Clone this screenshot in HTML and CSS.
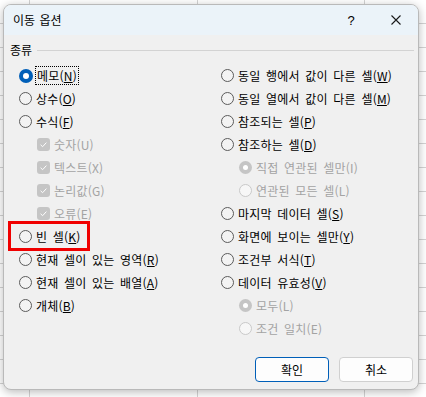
FILE: index.html
```html
<!DOCTYPE html>
<html lang="ko">
<head>
<meta charset="utf-8">
<title>이동 옵션</title>
<link rel="stylesheet" href="styles.css">
</head>
<body>
<div class="dialog">
  <div class="titlebar">
    <span class="title">이동 옵션</span>
    <span class="cap help">?</span>
    <span class="cap close"><svg width="10" height="10" viewBox="0 0 10 10"><path d="M0.5 0.5L9.5 9.5M9.5 0.5L0.5 9.5" stroke="#1a1a1a" stroke-width="1.1" fill="none"/></svg></span>
  </div>
  <div class="content">
    <div class="group-head"><span class="group-label">종류</span><span class="rule"></span></div>
    <div class="columns">
      <div class="col">
        <div class="opt"><span class="radio on"></span><span class="label focus">메모(<u>N</u>)</span></div>
        <div class="opt"><span class="radio"></span><span class="label">상수(<u>O</u>)</span></div>
        <div class="opt"><span class="radio"></span><span class="label">수식(<u>F</u>)</span></div>
        <div class="opt sub dis"><span class="check"><svg width="13" height="13" viewBox="0 0 13 13"><path d="M3.6 6.8L5.6 8.7L9.4 4.6" stroke="#fff" stroke-width="1" fill="none"/></svg></span><span class="label">숫자(U)</span></div>
        <div class="opt sub dis"><span class="check"><svg width="13" height="13" viewBox="0 0 13 13"><path d="M3.6 6.8L5.6 8.7L9.4 4.6" stroke="#fff" stroke-width="1" fill="none"/></svg></span><span class="label">텍스트(X)</span></div>
        <div class="opt sub dis"><span class="check"><svg width="13" height="13" viewBox="0 0 13 13"><path d="M3.6 6.8L5.6 8.7L9.4 4.6" stroke="#fff" stroke-width="1" fill="none"/></svg></span><span class="label">논리값(G)</span></div>
        <div class="opt sub dis"><span class="check"><svg width="13" height="13" viewBox="0 0 13 13"><path d="M3.6 6.8L5.6 8.7L9.4 4.6" stroke="#fff" stroke-width="1" fill="none"/></svg></span><span class="label">오류(E)</span></div>
        <div class="opt marked"><span class="radio"></span><span class="label">빈 셀(<u>K</u>)</span><span class="highlight"></span></div>
        <div class="opt"><span class="radio"></span><span class="label">현재 셀이 있는 영역(<u>R</u>)</span></div>
        <div class="opt"><span class="radio"></span><span class="label">현재 셀이 있는 배열(<u>A</u>)</span></div>
        <div class="opt"><span class="radio"></span><span class="label">개체(<u>B</u>)</span></div>
      </div>
      <div class="col">
        <div class="opt"><span class="radio"></span><span class="label">동일 행에서 값이 다른 셀(<u>W</u>)</span></div>
        <div class="opt"><span class="radio"></span><span class="label">동일 열에서 값이 다른 셀(<u>M</u>)</span></div>
        <div class="opt"><span class="radio"></span><span class="label">참조되는 셀(<u>P</u>)</span></div>
        <div class="opt"><span class="radio"></span><span class="label">참조하는 셀(<u>D</u>)</span></div>
        <div class="opt sub dis"><span class="radio on"></span><span class="label">직접 연관된 셀만(I)</span></div>
        <div class="opt sub dis"><span class="radio"></span><span class="label">연관된 모든 셀(L)</span></div>
        <div class="opt"><span class="radio"></span><span class="label">마지막 데이터 셀(<u>S</u>)</span></div>
        <div class="opt"><span class="radio"></span><span class="label">화면에 보이는 셀만(<u>Y</u>)</span></div>
        <div class="opt"><span class="radio"></span><span class="label">조건부 서식(<u>T</u>)</span></div>
        <div class="opt"><span class="radio"></span><span class="label">데이터 유효성(<u>V</u>)</span></div>
        <div class="opt sub dis"><span class="radio on"></span><span class="label">모두(L)</span></div>
        <div class="opt sub dis"><span class="radio"></span><span class="label">조건 일치(E)</span></div>
      </div>
    </div>
  </div>
  <div class="footer">
    <button class="btn default">확인</button>
    <button class="btn">취소</button>
  </div>
</div>
</body>
</html>
```

FILE: styles.css
```css
* { box-sizing: border-box; }

html, body {
  margin: 0;
  padding: 0;
}

body {
  width: 426px;
  height: 397px;
  overflow: hidden;
  font-family: "Noto Sans CJK KR", "Noto Sans", sans-serif;
  font-size: 12px;
  color: #000;
  background-color: #fff;
  background-image:
    linear-gradient(90deg, transparent 29px, #d4d4d4 29px, #d4d4d4 30px, transparent 30px),
    linear-gradient(90deg, transparent 197px, #d4d4d4 197px, #d4d4d4 198px, transparent 198px),
    linear-gradient(90deg, transparent 364px, #d4d4d4 364px, #d4d4d4 365px, transparent 365px),
    repeating-linear-gradient(180deg, transparent 0, transparent 23px, #d4d4d4 23px, #d4d4d4 24px);
  padding: 4px 0 0 3px;
}

.dialog {
  width: 416px;
  height: 386px;
  border: 1px solid #b9b9b9;
  border-radius: 8px;
  background: #f0f0f0;
  box-shadow: 0 2px 10px rgba(0, 0, 0, 0.28);
  overflow: hidden;
  display: flex;
  flex-direction: column;
}

.titlebar {
  height: 30px;
  flex: none;
  background: #ebf3f9;
  display: flex;
  align-items: center;
  padding-left: 9px;
}

.title {
  flex: 1;
  line-height: 16px;
  color: #000;
  word-spacing: 1px;
}

.cap {
  height: 30px;
  display: flex;
  align-items: center;
  justify-content: center;
}

.help {
  width: 46px;
  font-family: "Liberation Sans", sans-serif;
  font-size: 13px;
}

.close {
  width: 44px;
}

.content {
  flex: none;
  padding: 5px 4px 0 15px;
}

.group-head {
  height: 20px;
  display: flex;
  align-items: center;
  margin-left: -9px;
}

.group-label {
  line-height: 16px;
}

.rule {
  flex: 1;
  height: 1px;
  background: #d3d3d3;
  margin-left: 5px;
}

.columns {
  display: grid;
  grid-template-columns: 202px 1fr;
  margin-top: 4px;
}

.opt {
  height: 23px;
  display: flex;
  align-items: center;
  gap: 4px;
  position: relative;
  white-space: nowrap;
}

.opt.sub {
  padding-left: 18px;
}

.label {
  line-height: 16px;
  letter-spacing: 0.2px;
  word-spacing: 2px;
}

.label u {
  text-decoration: underline;
  text-underline-offset: 1px;
}

.label.focus {
  border: 1px dotted #000;
  padding: 0 1px;
  margin-left: -2px;
  line-height: 17px;
}

.dis .label {
  color: #a3a3a3;
}

.radio {
  flex: none;
  width: 13px;
  height: 13px;
  border-radius: 50%;
  border: 1px solid #5b5b5b;
  background: #f3f3f3;
  position: relative;
}

.radio.on {
  border: none;
  background: #005fb8;
  width: 14px;
  height: 14px;
}

.radio.on::after {
  content: "";
  position: absolute;
  left: 4px;
  top: 4px;
  width: 6px;
  height: 6px;
  border-radius: 50%;
  background: #fff;
}

.dis .radio {
  border-color: #c9c9c9;
  background: #f7f7f7;
}

.dis .radio.on {
  background: #c5c5c5;
  width: 13px;
  height: 13px;
}

.dis .radio.on::after {
  left: 4px;
  top: 4px;
  width: 5px;
  height: 5px;
}

.check {
  flex: none;
  width: 13px;
  height: 13px;
  border-radius: 3px;
  background: #c5c5c5;
  display: block;
}

.check svg {
  display: block;
}

.highlight {
  position: absolute;
  left: -11px;
  top: -4px;
  width: 82px;
  height: 30px;
  border: 3px solid #f00000;
}

.footer {
  margin-top: auto;
  display: flex;
  justify-content: flex-end;
  gap: 10px;
  padding: 0 5px 7px 0;
}

.btn {
  width: 74px;
  height: 25px;
  font-family: "Noto Sans CJK KR", "Noto Sans", sans-serif;
  font-size: 12px;
  color: #000;
  background: #fdfdfd;
  border: 1px solid #d0d0d0;
  border-radius: 4px;
  padding: 0;
  line-height: 16px;
}

.btn.default {
  border-color: #005fb8;
}
```
